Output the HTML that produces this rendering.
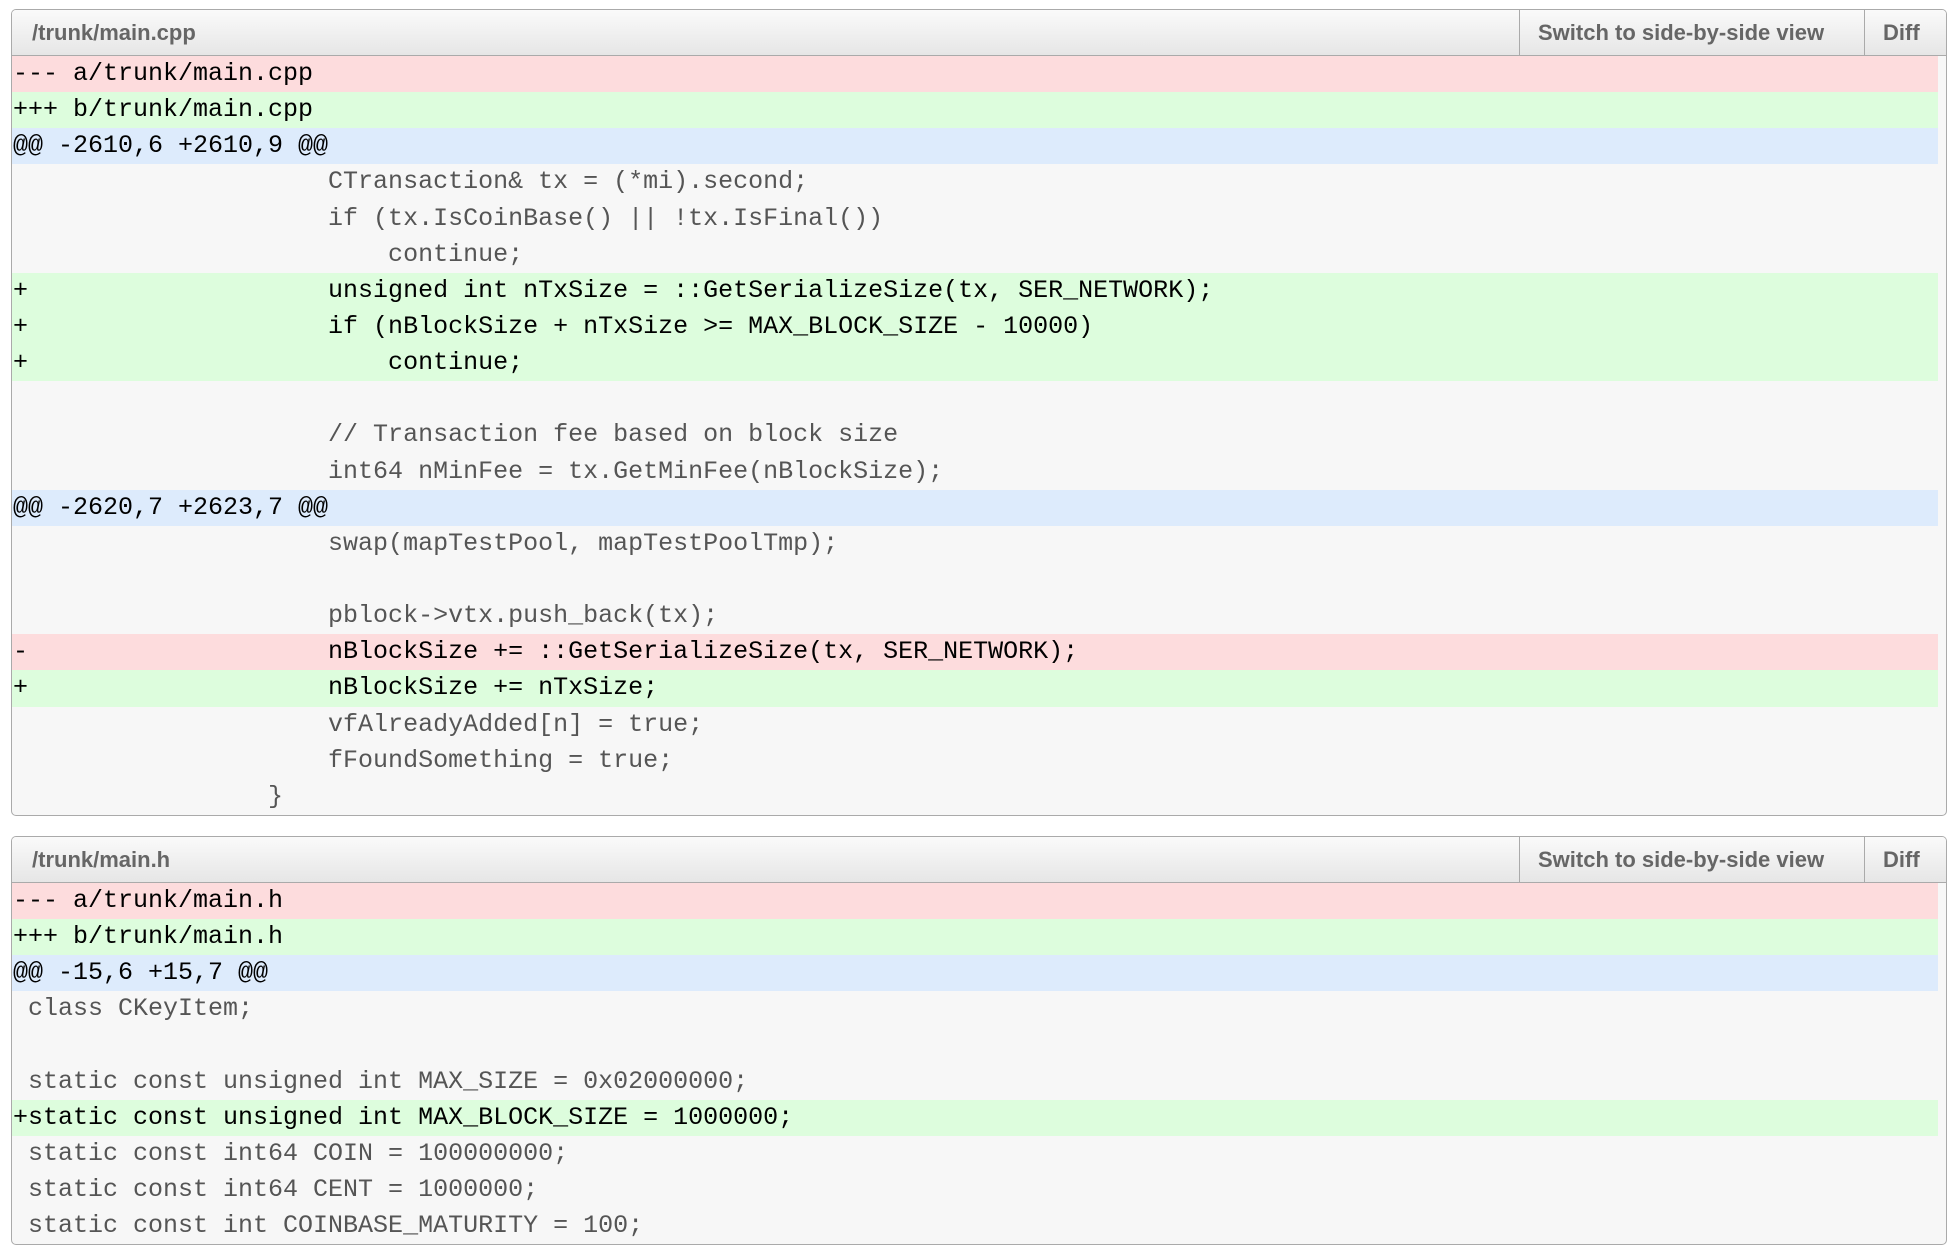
<!DOCTYPE html>
<html><head><meta charset="utf-8"><style>
html,body{margin:0;padding:0;background:#fff;width:1952px;height:1250px;overflow:hidden}
.box{position:absolute;left:11px;width:1934px;border:1px solid #aaa;border-radius:5px;background:#f7f7f7;overflow:hidden}
.hd{height:45px;border-bottom:1px solid #aaa;background:linear-gradient(#fafafa,#e6e6e6);position:relative;font-family:"Liberation Sans",sans-serif;font-size:22px;color:#666;font-weight:bold}
.hd .t{position:absolute;left:20px;top:10px}
.hd .b1{position:absolute;left:1507px;top:0;height:45px;border-left:1px solid #aaa;padding:10px 0 0 18px;box-sizing:border-box;width:345px}
.hd .b2{position:absolute;left:1852px;top:0;height:45px;border-left:1px solid #aaa;padding:10px 0 0 18px;box-sizing:border-box}
.rows{width:1926px}
.r{height:36.15px;line-height:36.15px;font-family:"Liberation Mono","Courier New",monospace;font-size:25px;white-space:pre;color:#555;padding-left:1px}
.d{background:#fddcdd;color:#000}.a{background:#ddfddd;color:#000}.h{background:#ddebfc;color:#000}
</style></head><body>
<div class="box" style="top:9px;height:805px">
<div class="hd"><span class="t">/trunk/main.cpp</span><span class="b1">Switch to side-by-side view</span><span class="b2">Diff</span></div>
<div class="rows">
<div class="r d">--- a/trunk/main.cpp</div>
<div class="r a">+++ b/trunk/main.cpp</div>
<div class="r h">@@ -2610,6 +2610,9 @@</div>
<div class="r">                     CTransaction&amp; tx = (*mi).second;</div>
<div class="r">                     if (tx.IsCoinBase() || !tx.IsFinal())</div>
<div class="r">                         continue;</div>
<div class="r a">+                    unsigned int nTxSize = ::GetSerializeSize(tx, SER_NETWORK);</div>
<div class="r a">+                    if (nBlockSize + nTxSize &gt;= MAX_BLOCK_SIZE - 10000)</div>
<div class="r a">+                        continue;</div>
<div class="r"> </div>
<div class="r">                     // Transaction fee based on block size</div>
<div class="r">                     int64 nMinFee = tx.GetMinFee(nBlockSize);</div>
<div class="r h">@@ -2620,7 +2623,7 @@</div>
<div class="r">                     swap(mapTestPool, mapTestPoolTmp);</div>
<div class="r"> </div>
<div class="r">                     pblock-&gt;vtx.push_back(tx);</div>
<div class="r d">-                    nBlockSize += ::GetSerializeSize(tx, SER_NETWORK);</div>
<div class="r a">+                    nBlockSize += nTxSize;</div>
<div class="r">                     vfAlreadyAdded[n] = true;</div>
<div class="r">                     fFoundSomething = true;</div>
<div class="r">                 }</div>
</div></div>
<div class="box" style="top:836px;height:407px">
<div class="hd"><span class="t">/trunk/main.h</span><span class="b1">Switch to side-by-side view</span><span class="b2">Diff</span></div>
<div class="rows">
<div class="r d">--- a/trunk/main.h</div>
<div class="r a">+++ b/trunk/main.h</div>
<div class="r h">@@ -15,6 +15,7 @@</div>
<div class="r"> class CKeyItem;</div>
<div class="r"> </div>
<div class="r"> static const unsigned int MAX_SIZE = 0x02000000;</div>
<div class="r a">+static const unsigned int MAX_BLOCK_SIZE = 1000000;</div>
<div class="r"> static const int64 COIN = 100000000;</div>
<div class="r"> static const int64 CENT = 1000000;</div>
<div class="r"> static const int COINBASE_MATURITY = 100;</div>
</div></div>
</body></html>
